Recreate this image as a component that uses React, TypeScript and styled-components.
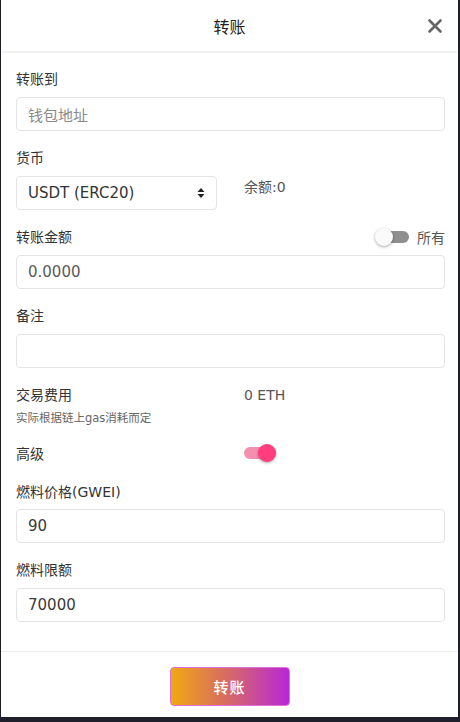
import React from "react";
import styled, { createGlobalStyle } from "styled-components";

const Global = createGlobalStyle`
  html, body { margin: 0; padding: 0; background: #1e1f2b; }
  body { font-family: "DejaVu Sans", "Noto Sans CJK SC", sans-serif; color: #333; }
  * { box-sizing: border-box; }
`;

const Modal = styled.div`
  margin-left: 1px;
  width: 457px;
  height: 717px;
  background: #fff;
  display: flex;
  flex-direction: column;
`;

const Header = styled.div`
  height: 53px;
  flex: none;
  position: relative;
  display: flex;
  align-items: center;
  justify-content: center;
  border-bottom: 2px solid #f1f1f3;
  margin: 0 1px;
`;

const Title = styled.div`
  font-size: 16px;
  font-weight: 400;
  color: #222;
  margin-top: 1px;
`;

const Close = styled.button`
  position: absolute;
  right: 14px;
  top: 18px;
  width: 16px;
  height: 16px;
  padding: 0;
  border: 0;
  background: none;
  display: flex;
`;

const Content = styled.div`
  flex: 1;
  padding: 16px 13px 0 15px;
  display: flex;
  flex-direction: column;
`;

const Field = styled.div<{ $gap?: number }>`
  display: flex;
  flex-direction: column;
  margin-bottom: ${(p) => p.$gap ?? 17}px;
`;

const LabelRow = styled.div<{ $gap?: number }>`
  display: flex;
  align-items: center;
  justify-content: space-between;
  height: 20px;
  margin-bottom: ${(p) => p.$gap ?? 8}px;
`;

const Label = styled.div`
  font-size: 14px;
  line-height: 20px;
  color: #333;
`;

const Input = styled.div<{ $tone?: "placeholder" | "muted"; $width?: number }>`
  height: 34px;
  width: ${(p) => (p.$width ? `${p.$width}px` : "100%")};
  border: 1px solid #e4e4e8;
  border-radius: 4px;
  padding: 0 11px;
  display: flex;
  align-items: center;
  justify-content: space-between;
  font-size: 15px;
  color: ${(p) =>
    p.$tone === "placeholder" ? "#8a8a8a" : p.$tone === "muted" ? "#5a5a5a" : "#3a3a3a"};
`;

const SelectText = styled.span`
  font-size: 15px;
  color: #333;
`;

const Grid = styled.div`
  display: grid;
  grid-template-columns: 228px 1fr;
`;

const SideText = styled.div`
  font-size: 14px;
  line-height: 20px;
  color: #555;
`;

const Hint = styled.div`
  font-size: 11.5px;
  line-height: 16px;
  color: #666;
  margin-top: 5px;
`;

const AllWrap = styled.div`
  display: flex;
  align-items: center;
  gap: 8px;
  font-size: 14px;
  color: #555;
`;

const Track = styled.div<{ $on?: boolean }>`
  position: relative;
  width: ${(p) => (p.$on ? 32 : 34)}px;
  height: 18px;
  display: flex;
  align-items: center;
  &::before {
    content: "";
    position: absolute;
    left: 0;
    right: 0;
    top: 3px;
    height: 12px;
    border-radius: 6px;
    background: ${(p) => (p.$on ? "#f58fb0" : "#8f8f8f")};
    ${(p) => (p.$on ? "" : "left: 8px;")}
  }
`;

const Knob = styled.div<{ $on?: boolean }>`
  position: absolute;
  top: 0;
  ${(p) => (p.$on ? "right: 0;" : "left: 0;")}
  width: 18px;
  height: 18px;
  border-radius: 50%;
  background: ${(p) => (p.$on ? "#ff3d7f" : "#fafafa")};
  box-shadow: 0 1px 3px rgba(0, 0, 0, 0.35);
`;

const Footer = styled.div`
  flex: none;
  height: 66px;
  border-top: 1px solid #efeff2;
  display: flex;
  justify-content: center;
  padding-top: 15px;
`;

const Submit = styled.button`
  width: 120px;
  height: 39px;
  border-radius: 4px;
  border: 1px solid #e070d8;
  background: linear-gradient(90deg, #f1a811 0%, #d86e60 45%, #b827d6 100%);
  color: #fff;
  font-family: "Noto Sans CJK SC", sans-serif;
  font-size: 15px;
  font-weight: 500;
  letter-spacing: 1px;
`;

const Toggle = ({ on }: { on?: boolean }) => (
  <Track $on={on}>
    <Knob $on={on} />
  </Track>
);

export default function App() {
  return (
    <>
      <Global />
      <Modal>
        <Header>
          <Title>转账</Title>
          <Close>
            <svg width="16" height="16" viewBox="0 0 16 16">
              <path d="M2.5 2.5 L13.5 13.5 M13.5 2.5 L2.5 13.5" stroke="#666" strokeWidth="2.6" strokeLinecap="round" />
            </svg>
          </Close>
        </Header>
        <Content>
          <Field>
            <LabelRow>
              <Label>转账到</Label>
            </LabelRow>
            <Input $tone="placeholder">钱包地址</Input>
          </Field>
          <Field>
            <LabelRow>
              <Label>货币</Label>
            </LabelRow>
            <Grid>
              <Input $width={201}>
                <SelectText>USDT (ERC20)</SelectText>
                <svg width="8" height="12" viewBox="0 0 8 12">
                  <path d="M4 1 L7.5 5 H0.5 Z M4 11 L7.5 7 H0.5 Z" fill="#222" />
                </svg>
              </Input>
              <SideText style={{ paddingTop: 1 }}>余额:0</SideText>
            </Grid>
          </Field>
          <Field>
            <LabelRow>
              <Label>转账金额</Label>
              <AllWrap>
                <Toggle />
                所有
              </AllWrap>
            </LabelRow>
            <Input $tone="muted">0.0000</Input>
          </Field>
          <Field>
            <LabelRow>
              <Label>备注</Label>
            </LabelRow>
            <Input />
          </Field>
          <Field $gap={18}>
            <Grid>
              <Label>交易费用</Label>
              <SideText>0 ETH</SideText>
            </Grid>
            <Hint>实际根据链上gas消耗而定</Hint>
          </Field>
          <Field $gap={18}>
            <Grid>
              <Label>高级</Label>
              <Toggle on />
            </Grid>
          </Field>
          <Field>
            <LabelRow $gap={7}>
              <Label>燃料价格(GWEI)</Label>
            </LabelRow>
            <Input>90</Input>
          </Field>
          <Field>
            <LabelRow>
              <Label>燃料限额</Label>
            </LabelRow>
            <Input>70000</Input>
          </Field>
        </Content>
        <Footer>
          <Submit>转账</Submit>
        </Footer>
      </Modal>
    </>
  );
}
